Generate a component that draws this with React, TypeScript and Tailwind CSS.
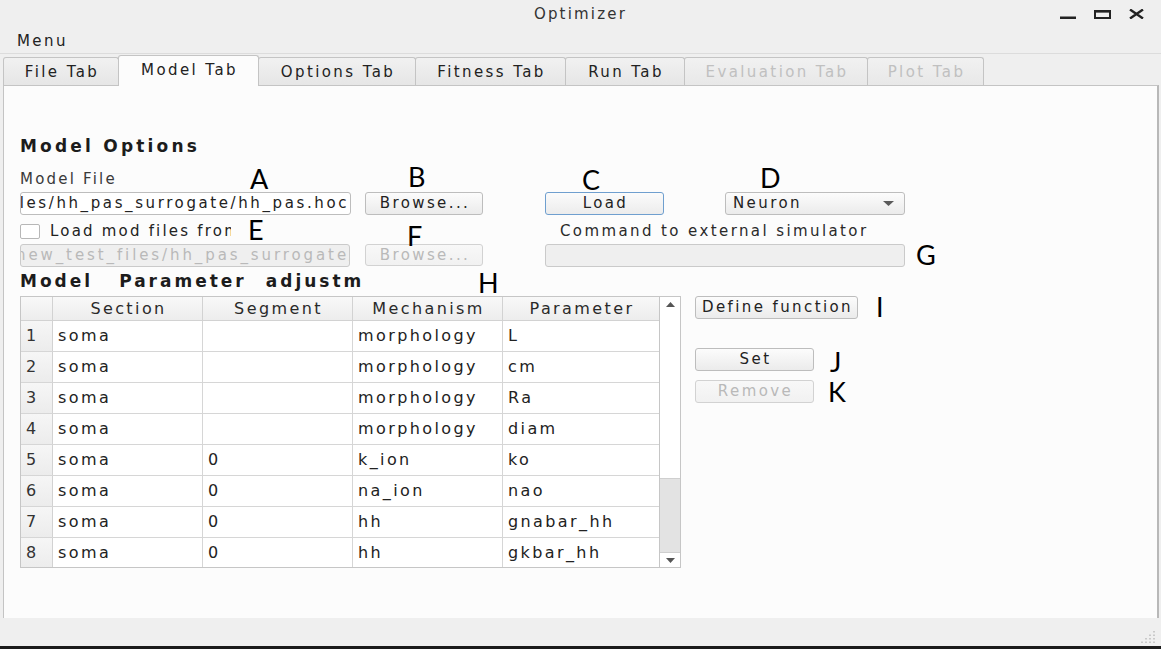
import React from "react";

type BtnProps = { label: string; className: string; disabled?: boolean; focused?: boolean };

function Button({ label, className, disabled, focused }: BtnProps) {
  const tone = disabled
    ? "border-[#d2d2d2] from-[#f8f8f8] to-[#f1f1f1] text-[#b9b9b9]"
    : focused
    ? "border-[#6f9fcf] from-[#fbfbfb] to-[#ececec] text-[#222]"
    : "border-[#bdbdbd] from-[#fcfcfc] to-[#ebebeb] text-[#222]";
  return (
    <div
      className={`flex shrink-0 items-center justify-center rounded-[3px] border bg-linear-to-b pl-[2px] text-[15px] tracking-[2.4px] ${tone} ${className}`}
    >
      {label}
    </div>
  );
}

const tabs = [
  { label: "File Tab", w: "w-[116px]", state: "normal" },
  { label: "Model Tab", w: "w-[141px]", state: "active" },
  { label: "Options Tab", w: "w-[158px]", state: "normal" },
  { label: "Fitness Tab", w: "w-[151px]", state: "normal" },
  { label: "Run Tab", w: "w-[120px]", state: "normal" },
  { label: "Evaluation Tab", w: "w-[184px]", state: "disabled" },
  { label: "Plot Tab", w: "w-[117px]", state: "disabled" },
];

const headers = [
  { label: "Section", w: "w-[150px] border-r" },
  { label: "Segment", w: "w-[150px] border-r" },
  { label: "Mechanism", w: "w-[150px] border-r" },
  { label: "Parameter", w: "flex-1" },
];

const rows = [
  ["soma", "", "morphology", "L"],
  ["soma", "", "morphology", "cm"],
  ["soma", "", "morphology", "Ra"],
  ["soma", "", "morphology", "diam"],
  ["soma", "0", "k_ion", "ko"],
  ["soma", "0", "na_ion", "nao"],
  ["soma", "0", "hh", "gnabar_hh"],
  ["soma", "0", "hh", "gkbar_hh"],
];

const cellW = ["w-[150px] border-r", "w-[150px] border-r", "w-[150px] border-r", "flex-1"];

const notes = [
  { t: "A", c: "left-[250px] top-[165px]" },
  { t: "B", c: "left-[408px] top-[163px]" },
  { t: "C", c: "left-[582px] top-[166px]" },
  { t: "D", c: "left-[760px] top-[164px]" },
  { t: "E", c: "left-[248px] top-[216px]" },
  { t: "F", c: "left-[407px] top-[222px]" },
  { t: "G", c: "left-[916px] top-[241px]" },
  { t: "H", c: "left-[478px] top-[269px]" },
  { t: "I", c: "left-[876px] top-[293px]" },
  { t: "J", c: "left-[830px] top-[348px]" },
  { t: "K", c: "left-[828px] top-[378px]" },
];

export default function App() {
  return (
    <div className="relative flex h-[649px] w-[1161px] flex-col overflow-hidden bg-[#efefef] font-['DejaVu_Sans',sans-serif] text-[#222]">
      {/* title bar */}
      <div className="grid h-[28px] shrink-0 grid-cols-[1fr_auto_1fr] items-center">
        <div />
        <div className="pt-[1px] text-[15px] tracking-[2.2px] text-[#333]">Optimizer</div>
        <div className="flex items-center justify-end gap-[18px] pr-[17px]">
          <svg width="16" height="10" viewBox="0 0 16 10">
            <rect x="0" y="7.5" width="16" height="2.5" fill="#222" />
          </svg>
          <svg width="17" height="9" viewBox="0 0 17 9">
            <rect x="1" y="1.25" width="15" height="6.75" fill="none" stroke="#222" strokeWidth="2" />
            <rect x="0" y="0" width="17" height="2.5" fill="#222" />
          </svg>
          <svg width="15" height="10" viewBox="0 0 15 10">
            <path d="M1 0.5 L14 9.5 M14 0.5 L1 9.5" stroke="#222" strokeWidth="2.4" />
          </svg>
        </div>
      </div>

      {/* menu bar */}
      <div className="flex h-[26px] shrink-0 items-center border-b border-[#dcdcdc] pl-[17px] pt-[2px] text-[15px] tracking-[2.4px]">
        Menu
      </div>

      {/* tabs */}
      <div className="flex h-[31px] shrink-0 items-end pl-[3px]">
        {tabs.map((t, i) => (
          <div
            key={t.label}
            className={`flex shrink-0 items-center justify-center rounded-t-[3px] border border-b-0 border-[#c4c4c4] pl-[2px] text-[15px] tracking-[2.4px] ${t.w} ${
              i > 0 ? "-ml-px" : ""
            } ${
              t.state === "active"
                ? "relative z-10 -mb-px h-[31px] bg-[#fcfcfc] pb-[1px]"
                : t.state === "disabled"
                ? "h-[28px] bg-linear-to-b from-[#f1f1f1] to-[#e8e8e8] pt-[2px] text-[#c0c0c0]"
                : "h-[28px] bg-linear-to-b from-[#f1f1f1] to-[#e6e6e6] pt-[2px]"
            }`}
          >
            {t.label}
          </div>
        ))}
      </div>

      {/* pane */}
      <div className="ml-[3px] flex h-[533px] w-[1156px] shrink-0 flex-col border border-b-0 border-[#c4c4c4] border-r-2 border-r-[#b8b8b8] bg-[#fcfcfc] pl-[16px] pt-[51px]">
        <div className="flex h-[20px] items-center text-[17px] font-bold tracking-[3.2px] text-[#1c1c1c]">
          Model Options
        </div>
        <div className="mt-[13px] flex h-[18px] items-center text-[15px] tracking-[2.2px] text-[#3a3a3a]">
          Model File
        </div>

        {/* row 1 */}
        <div className="mt-[4px] flex h-[23px] items-stretch">
          <div className="flex w-[331px] shrink-0 items-center justify-end overflow-hidden rounded-[3px] border border-[#bdbdbd] bg-white pr-[1px] text-[15px] tracking-[2.6px]">
            <span className="shrink-0 whitespace-nowrap">/home/user/new_test_files/hh_pas_surrogate/hh_pas.hoc</span>
          </div>
          <Button label="Browse..." className="ml-[14px] w-[118px]" />
          <Button label="Load" className="ml-[62px] w-[119px]" focused />
          <div className="ml-[61px] flex w-[180px] shrink-0 items-center justify-between rounded-[3px] border border-[#bdbdbd] bg-linear-to-b from-[#fcfcfc] to-[#ebebeb] pl-[7px] pr-[10px] text-[15px] tracking-[2.4px]">
            <span>Neuron</span>
            <svg width="11" height="5" viewBox="0 0 11 5">
              <polygon points="0,0 11,0 5.5,5" fill="#5a5a5a" />
            </svg>
          </div>
        </div>

        {/* row 2 */}
        <div className="mt-[6px] flex h-[20px] items-center">
          <div className="flex w-[525px] shrink-0 items-center">
            <div className="h-[15px] w-[20px] shrink-0 rounded-[2px] border border-[#b7b7b7] bg-white" />
            <div className="ml-[10px] w-[181px] overflow-hidden whitespace-nowrap text-[15px] tracking-[2.2px]">
              Load mod files from
            </div>
          </div>
          <div className="pl-[15px] text-[15px] tracking-[2.4px] text-[#2a2a2a]">Command to external simulator</div>
        </div>

        {/* row 3 */}
        <div className="mt-[3px] flex h-[23px] items-stretch">
          <div className="flex w-[330px] shrink-0 items-center overflow-hidden rounded-[3px] border border-[#cacaca] bg-[#efefef] text-[15px] tracking-[2.9px] text-[#b9b9b9]">
            <span className="-ml-[5px] shrink-0 whitespace-nowrap">new_test_files/hh_pas_surrogate/hh_pas.hoc</span>
          </div>
          <Button label="Browse..." className="ml-[15px] mb-[1px] w-[118px]" disabled />
          <div className="ml-[62px] w-[360px] shrink-0 rounded-[3px] border border-[#cacaca] bg-[#efefef]" />
        </div>

        {/* heading */}
        <div className="mt-[5px] flex h-[20px] items-center text-[17px] font-bold tracking-[3px] text-[#1c1c1c]">
          <span>Model</span>
          <span className="ml-[26px]">Parameter</span>
          <span className="ml-[19px] w-[97px] overflow-hidden whitespace-nowrap">adjustment</span>
        </div>

        {/* table + side buttons */}
        <div className="mt-[4px] flex items-start">
          <div className="flex h-[272px] w-[661px] shrink-0 border border-[#c6c6c6] bg-white">
            <div className="flex w-[638px] shrink-0 flex-col overflow-hidden">
              <div className="flex h-[24px] shrink-0 border-b border-[#d2d2d2] bg-linear-to-b from-[#f8f8f8] to-[#ededed] text-[16px] tracking-[2.4px] text-[#2a2a2a]">
                <div className="w-[32px] shrink-0 border-r border-[#d2d2d2]" />
                {headers.map((h) => (
                  <div key={h.label} className={`flex shrink-0 items-center justify-center border-[#d2d2d2] pl-[2px] ${h.w}`}>
                    {h.label}
                  </div>
                ))}
              </div>
              {rows.map((r, i) => (
                <div key={i} className="flex h-[31px] shrink-0 border-b border-[#d6d6d6] text-[16px] tracking-[2.4px]">
                  <div className="flex w-[32px] shrink-0 items-center border-r border-[#d2d2d2] bg-linear-to-b from-[#f6f6f6] to-[#ececec] pl-[5px] text-[#333]">
                    {i + 1}
                  </div>
                  {r.map((c, j) => (
                    <div key={j} className={`flex shrink-0 items-center border-[#d6d6d6] pl-[5px] ${cellW[j]}`}>
                      {c}
                    </div>
                  ))}
                </div>
              ))}
            </div>
            <div className="flex w-[21px] shrink-0 flex-col border-l border-[#c6c6c6] bg-white">
              <div className="flex h-[15px] shrink-0 items-center justify-center">
                <svg width="9" height="5" viewBox="0 0 9 5">
                  <polygon points="0,5 9,5 4.5,0" fill="#555" />
                </svg>
              </div>
              <div className="h-[167px] shrink-0 border-b border-[#cfcfcf] bg-white" />
              <div className="flex-1 bg-[#e3e3e3]" />
              <div className="flex h-[15px] shrink-0 items-center justify-center border-t border-[#cfcfcf] bg-white">
                <svg width="9" height="5" viewBox="0 0 9 5">
                  <polygon points="0,0 9,0 4.5,5" fill="#555" />
                </svg>
              </div>
            </div>
          </div>

          <div className="ml-[14px] flex flex-col">
            <Button label="Define function" className="h-[23px] w-[163px]" />
            <Button label="Set" className="mt-[29px] h-[23px] w-[119px]" />
            <Button label="Remove" className="mt-[9px] h-[23px] w-[119px]" disabled />
          </div>
        </div>
      </div>

      {/* bottom status area */}
      <div className="flex h-[28px] shrink-0 items-end justify-end pb-[3px] pr-[5px]">
        <svg width="16" height="12" viewBox="0 0 16 12">
          {[
            [13, 0],
            [13, 3.5],
            [9, 3.5],
            [13, 7],
            [9, 7],
            [5, 7],
            [13, 10.5],
            [9, 10.5],
            [5, 10.5],
            [1, 10.5],
          ].map(([x, y], k) => (
            <rect key={k} x={x} y={y} width="2" height="1.5" fill="#c9c9c9" />
          ))}
        </svg>
      </div>
      <div className="h-[3px] shrink-0 bg-[#1b1b1b]" />

      {/* annotation letters */}
      {notes.map((n) => (
        <div
          key={n.t}
          className={`absolute font-['Lato',sans-serif] text-[27px] leading-none text-black ${n.c}`}
        >
          {n.t}
        </div>
      ))}
    </div>
  );
}
